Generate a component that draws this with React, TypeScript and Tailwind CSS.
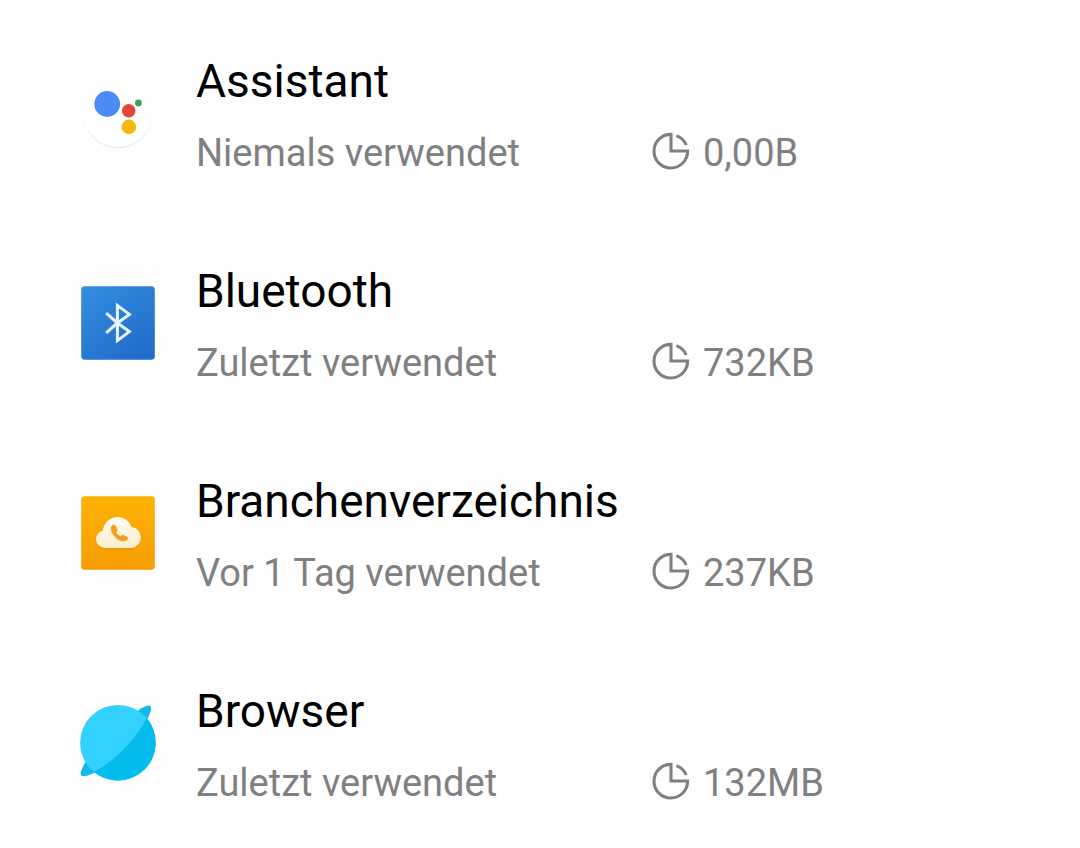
import type { ReactNode } from "react";

interface AppEntry {
  name: string;
  lastUsed: string;
  size: string;
  icon: ReactNode;
}

const ICON_CLASS = "w-20 h-20 mt-5 shrink-0";

function AssistantIcon() {
  return (
    <svg className={ICON_CLASS} viewBox="0 0 80 80" aria-hidden="true">
      <defs>
        <linearGradient id="assistant-rim" x1="0" y1="0" x2="0" y2="1">
          <stop offset="0.45" stopColor="#ffffff" />
          <stop offset="1" stopColor="#ededed" />
        </linearGradient>
      </defs>
      <circle cx="40" cy="40" r="35.5" fill="url(#assistant-rim)" />
      <circle cx="40" cy="39" r="34.8" fill="#ffffff" />
      <circle cx="29.2" cy="31" r="12.9" fill="#4c8bf5" />
      <circle cx="50.7" cy="37.7" r="6.8" fill="#e2463b" />
      <circle cx="50.9" cy="53.9" r="7.3" fill="#f8b90c" />
      <circle cx="60.4" cy="30" r="3.4" fill="#3da45c" />
    </svg>
  );
}

function BluetoothIcon() {
  return (
    <svg className={ICON_CLASS} viewBox="0 0 80 80" aria-hidden="true">
      <defs>
        <linearGradient id="bluetooth-bg" x1="0" y1="0" x2="0.7" y2="1">
          <stop offset="0" stopColor="#338fe0" />
          <stop offset="1" stopColor="#226dca" />
        </linearGradient>
      </defs>
      <rect x="3.2" y="3.2" width="73.6" height="73.6" rx="3.6" fill="url(#bluetooth-bg)" />
      <path
        d="M28.2 30.2 L39.4 40 L51.4 48.6 L39.4 57.6 V22.4 L51.4 31.4 L39.4 40 L28.2 49.8"
        fill="none"
        stroke="#e8f6ff"
        strokeWidth="3"
      />
    </svg>
  );
}

function DirectoryIcon() {
  return (
    <svg className={ICON_CLASS} viewBox="0 0 80 80" aria-hidden="true">
      <defs>
        <linearGradient id="directory-bg" x1="0" y1="0" x2="0" y2="1">
          <stop offset="0" stopColor="#fdb304" />
          <stop offset="1" stopColor="#f69d03" />
        </linearGradient>
        <linearGradient id="directory-cloud" x1="0" y1="0" x2="0" y2="1">
          <stop offset="0" stopColor="#fffcf4" />
          <stop offset="1" stopColor="#fdedcc" />
        </linearGradient>
      </defs>
      <rect x="3.2" y="3.2" width="73.6" height="73.6" rx="3.6" fill="url(#directory-bg)" />
      <path
        d="M26.5 57 A8.8 8.8 0 0 1 25 39.6 A14.6 14.6 0 0 1 53.2 36.2 A10.6 10.6 0 0 1 54 57 Z"
        fill="#e58f06"
        opacity="0.6"
      />
      <path
        d="M26.5 55 A8.8 8.8 0 0 1 25 37.6 A14.6 14.6 0 0 1 53.4 34 A10.6 10.6 0 0 1 54 55 Z"
        fill="url(#directory-cloud)"
      />
      <path
        d="M34.2 32.6 C35.4 31.6 36.8 31.8 37.4 33 L39 36.2 C39.5 37.3 39.2 38.2 37.8 39 C38.6 41 40.4 42.8 42.6 43.7 C43.4 42.2 44.4 41.9 45.5 42.4 L48.8 44 C50 44.6 50 45.9 49 46.7 C46.4 48.6 42.4 48.2 38.4 45 C34 41.2 31.8 35.4 34.2 32.6 Z"
        fill="#f0a01e"
        stroke="#f0a01e"
        strokeWidth="0.8"
      />
    </svg>
  );
}

function BrowserIcon() {
  return (
    <svg className={ICON_CLASS} viewBox="0 0 80 80" aria-hidden="true">
      {/* Ring ends behind the planet */}
      <path
        d="M60 7.8 C65 4 70.4 1.6 72.2 3 C74.4 4.8 72.4 10.4 68.7 17 L56 20 Z M8.2 58 C4.6 63.4 1.6 70.4 3.2 72.4 C5 74.4 10.6 72.4 17 69.4 L22 56 Z"
        fill="#12b8ea"
      />
      <circle cx="40" cy="39.8" r="37.9" fill="#33d1ff" />
      <path
        d="M68.7 15.1 A37.9 37.9 0 0 1 15.9 69 C36 58.5 56.5 38 68.7 15.1 Z"
        fill="#04bbee"
      />
    </svg>
  );
}

function StorageIcon() {
  return (
    <svg
      className="w-10 h-11 shrink-0"
      viewBox="0 0 40 40"
      fill="none"
      stroke="#808080"
      strokeWidth="3.1"
      aria-hidden="true"
    >
      <path d="M20 3.4 V20 H36.6 A16.8 16.8 0 1 1 20 3.4 Z" />
      <path d="M25.4 4.6 A16.8 16.8 0 0 1 35.2 14" />
    </svg>
  );
}

const APPS: AppEntry[] = [
  { name: "Assistant", lastUsed: "Niemals verwendet", size: "0,00B", icon: <AssistantIcon /> },
  { name: "Bluetooth", lastUsed: "Zuletzt verwendet", size: "732KB", icon: <BluetoothIcon /> },
  { name: "Branchenverzeichnis", lastUsed: "Vor 1 Tag verwendet", size: "237KB", icon: <DirectoryIcon /> },
  { name: "Browser", lastUsed: "Zuletzt verwendet", size: "132MB", icon: <BrowserIcon /> },
];

function AppRow({ name, lastUsed, size, icon }: AppEntry) {
  return (
    <li className="flex items-start gap-[38px] py-[43px] pl-[78px] pr-10">
      {icon}
      <div className="flex-1 min-w-0">
        <h2 className="text-[46px] leading-[56px] text-black">{name}</h2>
        <div className="mt-5 flex items-start text-[38px] leading-[48px] text-[#808080]">
          <p className="w-[455px] shrink-0">{lastUsed}</p>
          <p className="flex items-start gap-3">
            <StorageIcon />
            {size}
          </p>
        </div>
      </div>
    </li>
  );
}

export default function App() {
  return (
    <main className="min-h-screen bg-[#fefefe] pt-[10px] font-[Roboto,sans-serif]">
      <ul>
        {APPS.map((app) => (
          <AppRow key={app.name} {...app} />
        ))}
      </ul>
    </main>
  );
}
